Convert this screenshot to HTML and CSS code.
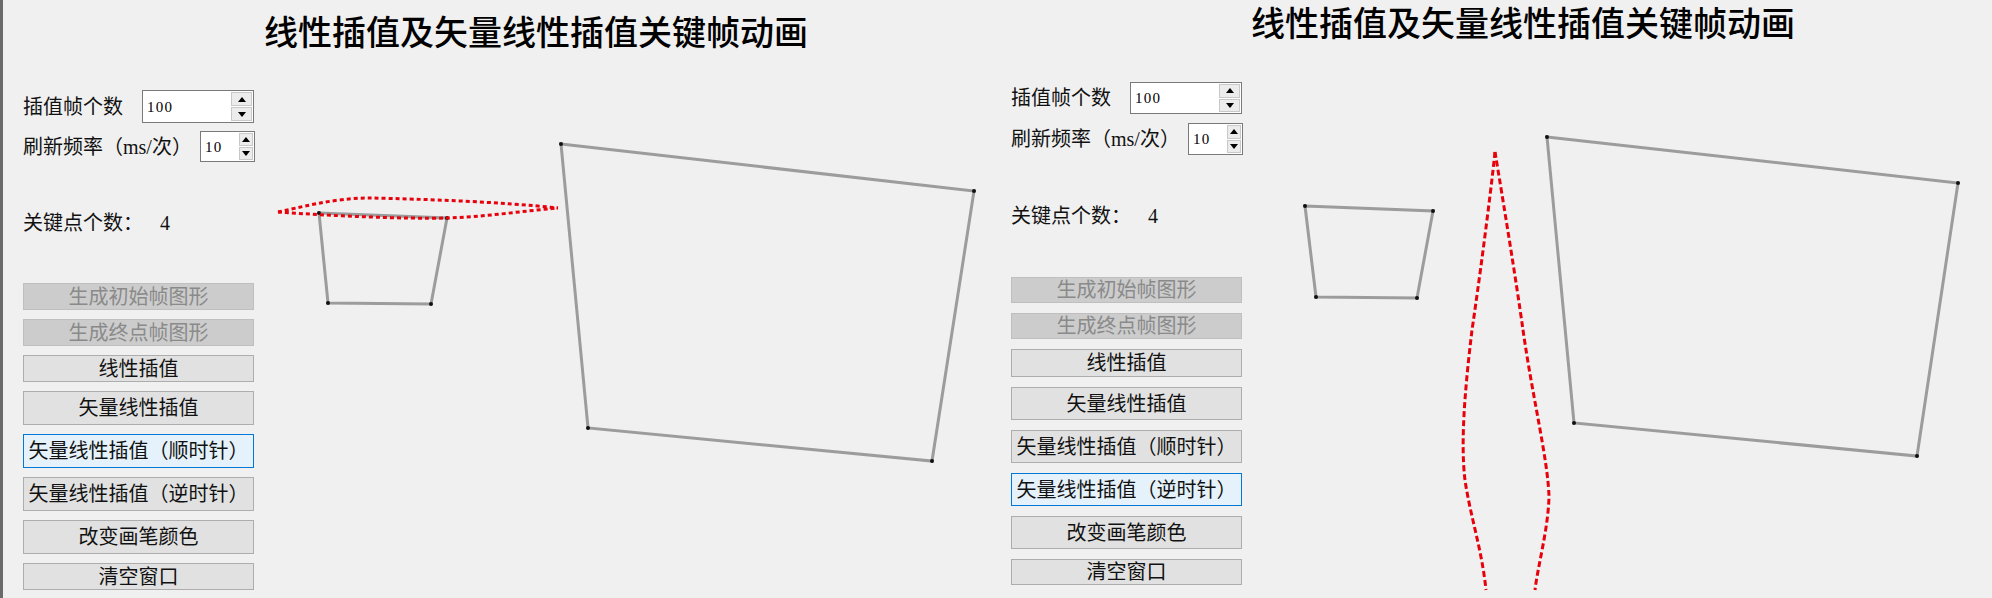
FILE: index.html
```html
<!DOCTYPE html>
<html lang="zh-CN">
<head>
<meta charset="utf-8">
<title>线性插值及矢量线性插值关键帧动画</title>
<link rel="stylesheet" href="styles.css">
</head>
<body>
<div class="screen">
  <section class="panel panel-a">
    <svg class="canvas" viewBox="0 0 985 598" width="985" height="598">
      <g class="shape">
        <polygon points="316,213 444,218 428,304 325,303"/>
        <polygon points="558,144 971,191 929,461 585,428"/>
      </g>
      <g class="dots">
        <circle cx="316" cy="213" r="2"/><circle cx="444" cy="218" r="2"/><circle cx="428" cy="304" r="2"/><circle cx="325" cy="303" r="2"/>
        <circle cx="558" cy="144" r="2"/><circle cx="971" cy="191" r="2"/><circle cx="929" cy="461" r="2"/><circle cx="585" cy="428" r="2"/>
      </g>
      <path class="interp interp-a" d="M275,212 C295,208 330,198 366,198 C420,199 500,202 555,208"/>
      <path class="interp interp-a" d="M275,212 C330,216 400,219 444,218 C480,217 520,211 555,208"/>
    </svg>
    <h1 class="title">线性插值及矢量线性插值关键帧动画</h1>
    <div class="sidebar">
      <div class="field field-1">
        <span class="label">插值帧个数</span>
        <div class="spin spin-wide">
          <span class="spin-value">100</span>
          <div class="spin-btns"><span class="spin-btn up"></span><span class="spin-btn down"></span></div>
        </div>
      </div>
      <div class="field field-2">
        <span class="label">刷新频率（ms/次）</span>
        <div class="spin spin-narrow">
          <span class="spin-value">10</span>
          <div class="spin-btns"><span class="spin-btn up"></span><span class="spin-btn down"></span></div>
        </div>
      </div>
      <div class="keycount"><span class="label">关键点个数：</span><span class="count">4</span></div>
      <div class="buttons">
        <button class="btn sm" disabled>生成初始帧图形</button>
        <button class="btn sm" disabled>生成终点帧图形</button>
        <button class="btn md">线性插值</button>
        <button class="btn lg">矢量线性插值</button>
        <button class="btn lg focus">矢量线性插值（顺时针）</button>
        <button class="btn lg">矢量线性插值（逆时针）</button>
        <button class="btn lg">改变画笔颜色</button>
        <button class="btn sm">清空窗口</button>
      </div>
    </div>
  </section>
  <section class="panel panel-b">
    <svg class="canvas" viewBox="0 0 1004 598" width="1004" height="598">
      <g class="shape">
        <polygon points="317,206 445,211 429,298 328,297"/>
        <polygon points="559,137 970,183 929,456 586,423"/>
      </g>
      <g class="dots">
        <circle cx="317" cy="206" r="2"/><circle cx="445" cy="211" r="2"/><circle cx="429" cy="298" r="2"/><circle cx="328" cy="297" r="2"/>
        <circle cx="559" cy="137" r="2"/><circle cx="970" cy="183" r="2"/><circle cx="929" cy="456" r="2"/><circle cx="586" cy="423" r="2"/>
      </g>
      <path class="interp interp-b" d="M507,152 C502,200 490,290 484,330 C478,380 472,440 477,480 C482,515 494,550 498,590"/>
      <path class="interp interp-b" d="M507,152 C515,200 528,280 535,330 C545,400 560,460 561,497 C560,530 550,565 547,590"/>
    </svg>
    <h1 class="title">线性插值及矢量线性插值关键帧动画</h1>
    <div class="sidebar">
      <div class="field field-1">
        <span class="label">插值帧个数</span>
        <div class="spin spin-wide">
          <span class="spin-value">100</span>
          <div class="spin-btns"><span class="spin-btn up"></span><span class="spin-btn down"></span></div>
        </div>
      </div>
      <div class="field field-2">
        <span class="label">刷新频率（ms/次）</span>
        <div class="spin spin-narrow">
          <span class="spin-value">10</span>
          <div class="spin-btns"><span class="spin-btn up"></span><span class="spin-btn down"></span></div>
        </div>
      </div>
      <div class="keycount"><span class="label">关键点个数：</span><span class="count">4</span></div>
      <div class="buttons">
        <button class="btn sm" disabled>生成初始帧图形</button>
        <button class="btn sm" disabled>生成终点帧图形</button>
        <button class="btn md">线性插值</button>
        <button class="btn lg">矢量线性插值</button>
        <button class="btn lg">矢量线性插值（顺时针）</button>
        <button class="btn lg focus">矢量线性插值（逆时针）</button>
        <button class="btn lg">改变画笔颜色</button>
        <button class="btn sm">清空窗口</button>
      </div>
    </div>
  </section>
</div>
</body>
</html>
```

FILE: styles.css
```css
html, body {
  margin: 0;
  padding: 0;
}

body {
  width: 1992px;
  height: 598px;
  overflow: hidden;
  background: #f0f0f0;
  color: #111;
  font-family: "Liberation Serif", "Noto Sans CJK SC", serif;
}

.screen {
  display: flex;
  height: 598px;
}

.panel {
  position: relative;
  height: 598px;
  box-sizing: border-box;
  background: #f0f0f0;
}

.panel-a {
  width: 988px;
  border-left: 3px solid #6a6a6a;
  --title-top: 14px;
  --title-left: 261px;
  --side-left: 20px;
  --row1-top: 42px;
  --row1-h: 33px;
  --row2-top: 8px;
  --row2-h: 31px;
  --key-top: 51px;
  --btn-top: 50px;
  --gap: 9px;
  --h-sm: 27px;
  --h-md: 27px;
  --h-lg: 34px;
}

.panel-b {
  flex: 1;
  --title-top: 5px;
  --title-left: 263px;
  --side-left: 23px;
  --row1-top: 43px;
  --row1-h: 32px;
  --row2-top: 9px;
  --row2-h: 32px;
  --key-top: 51px;
  --btn-top: 51px;
  --gap: 10px;
  --h-sm: 26px;
  --h-md: 28px;
  --h-lg: 33px;
}

.canvas {
  position: absolute;
  left: 0;
  top: 0;
}

.shape polygon {
  fill: none;
  stroke: #9c9c9c;
  stroke-width: 3;
  stroke-linejoin: miter;
}

.dots circle {
  fill: #111;
}

.interp {
  fill: none;
  stroke: #e8000b;
  stroke-width: 3;
}

.interp-a {
  stroke-dasharray: 4 3;
}

.interp-b {
  stroke-dasharray: 6 3;
}

.title {
  position: relative;
  margin: 0;
  padding-top: var(--title-top);
  padding-left: var(--title-left);
  font-family: "Noto Sans CJK SC", sans-serif;
  font-size: 34px;
  line-height: 34px;
  font-weight: 500;
  color: #000;
  white-space: nowrap;
}

.sidebar {
  position: relative;
  width: 231px;
  margin-left: var(--side-left);
  display: flex;
  flex-direction: column;
  font-size: 20px;
}

.label {
  white-space: nowrap;
  line-height: 20px;
  color: #111;
}

.field {
  display: flex;
  justify-content: space-between;
  align-items: center;
}

.field-1 {
  margin-top: var(--row1-top);
  height: var(--row1-h);
}

.field-2 {
  margin-top: var(--row2-top);
  height: var(--row2-h);
}

.spin {
  box-sizing: border-box;
  height: 100%;
  display: flex;
  align-items: center;
  justify-content: space-between;
  background: #fff;
  border: 1px solid #7a7a7a;
  padding: 1px 1px 1px 4px;
}

.spin-wide {
  width: 112px;
}

.spin-narrow {
  width: 55px;
  margin-right: -1px;
}

.spin-value {
  font-family: "Liberation Serif", serif;
  font-size: 15px;
  letter-spacing: 1.3px;
  line-height: 20px;
  color: #000;
}

.spin-btns {
  align-self: stretch;
  display: flex;
  flex-direction: column;
}

.spin-wide .spin-btns {
  width: 21px;
}

.spin-narrow .spin-btns {
  width: 14px;
}

.spin-btn {
  flex: 1;
  box-sizing: border-box;
  background: #ececec;
  border: 1px solid #c9c9c9;
  display: flex;
  align-items: center;
  justify-content: center;
}

.spin-btn + .spin-btn {
  margin-top: 1px;
}

.spin-btn.up::before {
  content: "";
  border-left: 4px solid transparent;
  border-right: 4px solid transparent;
  border-bottom: 5px solid #000;
}

.spin-btn.down::before {
  content: "";
  border-left: 4px solid transparent;
  border-right: 4px solid transparent;
  border-top: 5px solid #000;
}

.keycount {
  margin-top: var(--key-top);
  display: flex;
  align-items: center;
  gap: 17px;
  height: 20px;
}

.count {
  font-size: 20px;
  line-height: 20px;
  color: #111;
}

.buttons {
  margin-top: var(--btn-top);
  display: flex;
  flex-direction: column;
  gap: var(--gap);
}

.btn {
  box-sizing: border-box;
  width: 231px;
  margin: 0;
  padding: 0;
  background: #e1e1e1;
  border: 1px solid #adadad;
  border-radius: 0;
  font-family: "Liberation Serif", "Noto Sans CJK SC", serif;
  font-size: 20px;
  line-height: 20px;
  color: #111;
  white-space: nowrap;
  text-align: center;
}

.btn.sm {
  height: var(--h-sm);
}

.btn.md {
  height: var(--h-md);
}

.btn.lg {
  height: var(--h-lg);
}

.btn:disabled {
  background: #cccccc;
  border-color: #bfbfbf;
  color: #8a8a8a;
}

.btn.focus {
  background: #e5f1fb;
  border-color: #0078d7;
}
```
